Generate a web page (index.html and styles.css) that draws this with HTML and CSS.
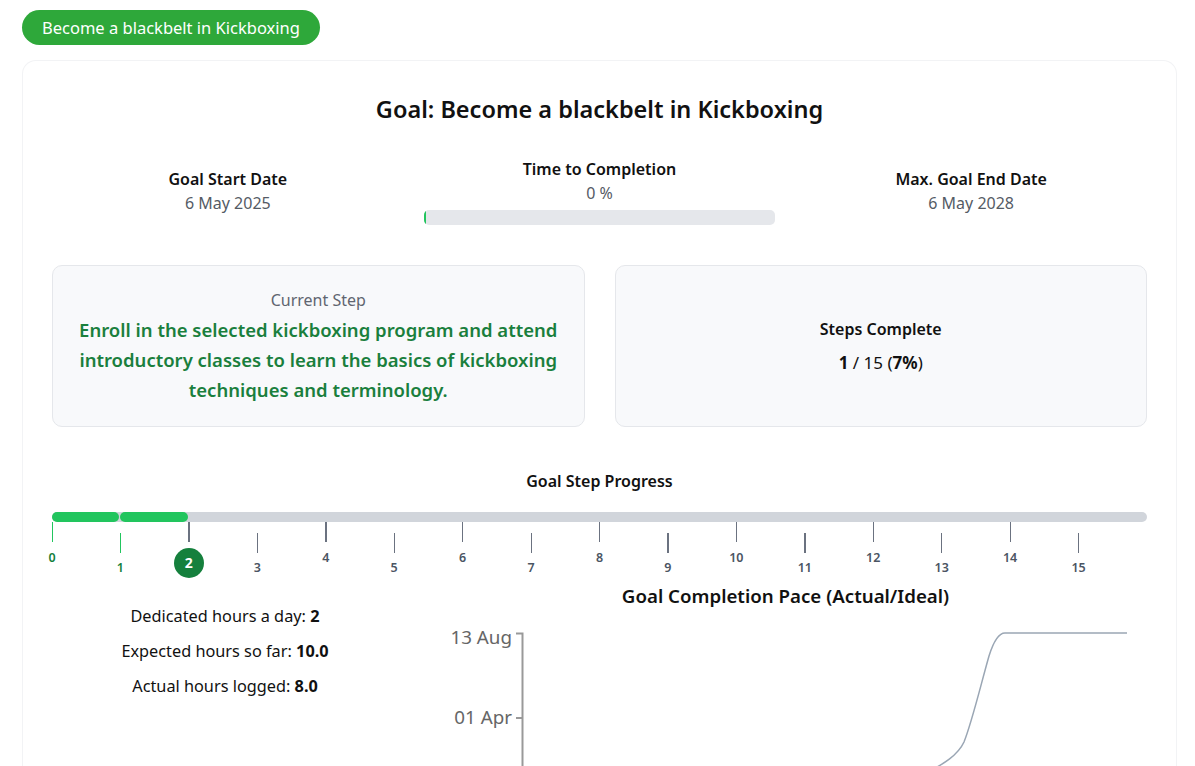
FILE: index.html
```html
<!DOCTYPE html>
<html>
<head>
<meta charset="utf-8">
<link rel="stylesheet" href="styles.css">
</head>
<body>
<div class="page">
  <div class="pill">Become a blackbelt in Kickboxing</div>
  <div class="card">
    <h1 class="title">Goal: Become a blackbelt in Kickboxing</h1>
    <div class="stats">
      <div class="stat">
        <div class="stat-label">Goal Start Date</div>
        <div class="stat-value">6 May 2025</div>
      </div>
      <div class="stat">
        <div class="stat-label">Time to Completion</div>
        <div class="stat-value">0 %</div>
        <div class="time-bar"><div class="time-fill"></div></div>
      </div>
      <div class="stat">
        <div class="stat-label">Max. Goal End Date</div>
        <div class="stat-value">6 May 2028</div>
      </div>
    </div>
    <div class="boxes">
      <div class="box">
        <div class="box-label">Current Step</div>
        <div class="step-text">Enroll in the selected kickboxing program and attend introductory classes to learn the basics of kickboxing techniques and terminology.</div>
      </div>
      <div class="box">
        <div class="box-head">Steps Complete</div>
        <div class="box-count"><b>1</b> / 15 (<b>7%</b>)</div>
      </div>
    </div>
    <div class="progress-title">Goal Step Progress</div>
    <div class="progress">
      <div class="track">
        <div class="seg done" style="left:0%"></div>
        <div class="seg done" style="left:6.25%"></div>
      </div>
      <div class="ticks">
        <div class="tick up done" style="left:0%"><span class="line"></span><span class="num">0</span></div>
        <div class="tick down done" style="left:6.25%"><span class="line"></span><span class="num">1</span></div>
        <div class="tick up current" style="left:12.5%"><span class="line"></span><span class="badge">2</span></div>
        <div class="tick down" style="left:18.75%"><span class="line"></span><span class="num">3</span></div>
        <div class="tick up" style="left:25%"><span class="line"></span><span class="num">4</span></div>
        <div class="tick down" style="left:31.25%"><span class="line"></span><span class="num">5</span></div>
        <div class="tick up" style="left:37.5%"><span class="line"></span><span class="num">6</span></div>
        <div class="tick down" style="left:43.75%"><span class="line"></span><span class="num">7</span></div>
        <div class="tick up" style="left:50%"><span class="line"></span><span class="num">8</span></div>
        <div class="tick down" style="left:56.25%"><span class="line"></span><span class="num">9</span></div>
        <div class="tick up" style="left:62.5%"><span class="line"></span><span class="num">10</span></div>
        <div class="tick down" style="left:68.75%"><span class="line"></span><span class="num">11</span></div>
        <div class="tick up" style="left:75%"><span class="line"></span><span class="num">12</span></div>
        <div class="tick down" style="left:81.25%"><span class="line"></span><span class="num">13</span></div>
        <div class="tick up" style="left:87.5%"><span class="line"></span><span class="num">14</span></div>
        <div class="tick down" style="left:93.75%"><span class="line"></span><span class="num">15</span></div>
      </div>
    </div>
    <div class="bottom">
      <div class="hours">
        <p>Dedicated hours a day: <b>2</b></p>
        <p>Expected hours so far: <b>10.0</b></p>
        <p>Actual hours logged: <b>8.0</b></p>
      </div>
      <div class="chart">
        <div class="chart-title">Goal Completion Pace (Actual/Ideal)</div>
        <svg class="chart-svg" width="723" height="170" viewBox="0 0 723 170">
          <g class="axis">
            <path d="M92,21.5H98.5V200" fill="none" stroke="#999" stroke-width="2"/>
            <line x1="92" y1="106" x2="98" y2="106" stroke="#999" stroke-width="2"/>
            <text x="88" y="32" text-anchor="end">13 Aug</text>
            <text x="88" y="112" text-anchor="end">01 Apr</text>
          </g>
          <path d="M500,162 C520,152 534,143 540,130 C548,110 557,72 565,44 C570,28 575,21 581,21 L703,21" fill="none" stroke="#9aa6b4" stroke-width="1.5"/>
        </svg>
      </div>
    </div>
  </div>
</div>
</body>
</html>
```
FILE: styles.css
```css
* { box-sizing: border-box; }
html, body { margin: 0; padding: 0; background: #fff; overflow: hidden; }
body { font-family: "Noto Sans", "Open Sans", sans-serif; color: #111; }
.page { padding: 10px 18px 0 22px; height: 766px; overflow: hidden; }
.pill {
  display: inline-block;
  background: #2ea83a;
  color: #fff;
  font-size: 16.5px;
  line-height: 35px;
  height: 35px;
  padding: 0 20px;
  border-radius: 18px;
}
.card {
  margin-top: 15px;
  border: 1px solid #f2f3f5;
  border-bottom: none;
  border-radius: 14px 14px 0 0;
  padding: 20px 29px 0 29px;
  height: 706px;
  overflow: hidden;
}
.title {
  margin: 12px 0 0;
  text-align: center;
  font-size: 23.5px;
  font-weight: 600;
  line-height: 32px;
}
.stats {
  display: grid;
  grid-template-columns: 1fr 1fr 1fr;
  gap: 20px;
  align-items: center;
  margin-top: 32px;
}
.stat { text-align: center; }
.stat-label { font-size: 16px; font-weight: 600; line-height: 24px; }
.stat-value { font-size: 16px; color: #555b65; line-height: 25px; }
.time-bar {
  margin-top: 4px;
  height: 15px;
  border-radius: 5px;
  background: #e5e7eb;
  overflow: hidden;
}
.time-fill { width: 2px; height: 100%; background: #22c55e; }
.boxes {
  display: grid;
  grid-template-columns: 1fr 1fr;
  gap: 30px;
  margin-top: 40px;
}
.box {
  background: #f8f9fb;
  border: 1px solid #e5e7eb;
  border-radius: 10px;
  height: 162px;
  display: flex;
  flex-direction: column;
  justify-content: center;
  align-items: center;
  text-align: center;
  padding: 0 20px;
}
.box-label { font-size: 16px; color: #5f6570; line-height: 24px; margin-bottom: 3px; }
.step-text { font-size: 18.5px; font-weight: 600; color: #1a7f3d; line-height: 30px; }
.box-head { font-size: 16px; font-weight: 600; line-height: 24px; margin-bottom: 10px; }
.box-count { font-size: 17px; line-height: 24px; }
.box-count b { font-weight: 700; }
.progress-title {
  text-align: center;
  font-size: 16px;
  font-weight: 600;
  line-height: 24px;
  margin-top: 42px;
}
.progress { position: relative; margin-top: 19px; height: 72px; }
.track {
  position: relative;
  height: 10px;
  border-radius: 5px;
  background: #d1d5db;
}
.seg {
  position: absolute;
  top: 0;
  width: calc(6.25% - 1px);
  height: 10px;
  border-radius: 5px;
  background: #22c55e;
}
.ticks { position: relative; height: 62px; }
.tick { position: absolute; top: 0; width: 0; }
.tick .line {
  position: absolute;
  left: -0.5px;
  width: 1.3px;
  height: 20px;
  background: #6b7280;
}
.tick.up .line { top: 0; }
.tick.down .line { top: 11px; }
.tick.done .line { background: #22c55e; }
.tick .num {
  position: absolute;
  left: -15px;
  width: 30px;
  text-align: center;
  font-size: 12.5px;
  font-weight: 600;
  color: #4b5563;
  line-height: 16px;
}
.tick.up .num { top: 28px; }
.tick.down .num { top: 38px; }
.tick.done .num { color: #15803d; }
.badge {
  position: absolute;
  left: -15px;
  top: 26px;
  width: 30px;
  height: 30px;
  border-radius: 50%;
  background: #15803d;
  color: #fff;
  font-size: 14px;
  font-weight: 700;
  line-height: 30px;
  text-align: center;
}
.bottom {
  display: grid;
  grid-template-columns: 346px 1fr;
  gap: 26px;
}
.hours { text-align: center; padding-top: 20px; }
.hours p { margin: 0 0 11px; font-size: 16.3px; line-height: 24px; }
.hours b { font-weight: 700; }
.chart-title {
  text-align: center;
  font-size: 18.7px;
  font-weight: 600;
  line-height: 24px;
}
.chart-svg { display: block; margin-top: 4px; }
.axis text { font-family: "Noto Sans", "Open Sans", sans-serif; font-size: 18.8px; fill: #666; }
```
